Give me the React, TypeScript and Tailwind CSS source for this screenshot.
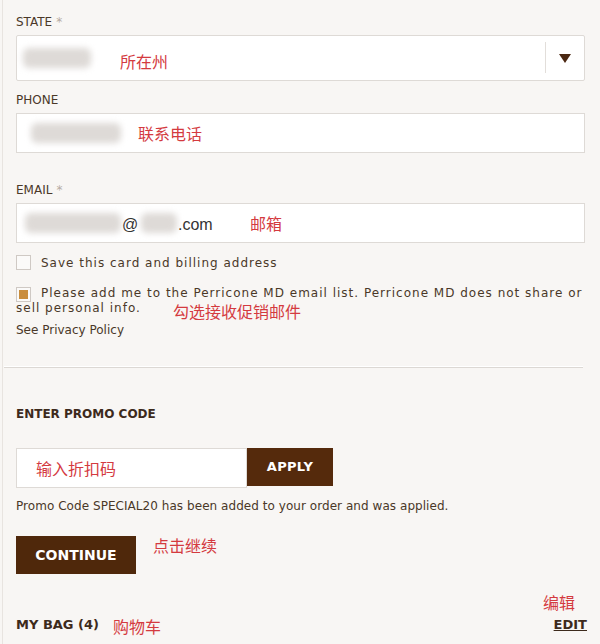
const dv = "font-['DejaVu_Sans',Verdana,sans-serif]";
const cjk = "font-['Noto_Sans_CJK_SC',sans-serif] text-[#d43a3f]";

const Blur = ({ className }: { className: string }) => (
  <div className={`absolute bg-[#dedad7] blur-[3px] rounded-md ${className}`}></div>
);

const Label = ({ text, required }: { text: string; required?: boolean }) => (
  <div className={`${dv} text-[12px] leading-4 text-[#4a3828]`}>
    {text}
    {required && <span className="text-[#b5aba3] ml-1">*</span>}
  </div>
);

const App = () => {
  return (
    <div className="w-[600px] h-[644px] bg-[#f8f6f4] overflow-hidden pl-[2px]">
      <div className="h-full border-l border-[#e8e4e0] pl-[13px] pr-[15px] pt-[14px]">
        <Label text="STATE" required />
        <div className="mt-[5px] h-[46px] bg-white border border-[#dedad6] rounded-[2px] relative flex items-center">
          <Blur className="left-[6px] top-[12px] w-[68px] h-[20px]" />
          <span className={`${cjk} text-[16px] ml-[103px] mt-[6px]`}>所在州</span>
          <div className="absolute right-[38px] top-[6px] h-[31px] w-px bg-[#e2deda]"></div>
          <svg className="absolute right-[13px] top-[18px]" width="12" height="9" viewBox="0 0 12 9">
            <path d="M0 0 H12 L6 9 Z" fill="#4b2812" />
          </svg>
        </div>

        <div className="mt-[11px]">
          <Label text="PHONE" />
        </div>
        <div className="mt-[5px] h-[40px] bg-white border border-[#dedad6] relative flex items-center">
          <Blur className="left-[14px] top-[9px] w-[90px] h-[20px]" />
          <span className={`${cjk} text-[16px] ml-[121px]`}>联系电话</span>
        </div>

        <div className="mt-[29px]">
          <Label text="EMAIL" required />
        </div>
        <div className="mt-[5px] h-[40px] bg-white border border-[#dedad6] relative flex items-center font-['Liberation_Sans',Arial,sans-serif] text-[16px] text-[#333]">
          <Blur className="left-[8px] top-[9px] w-[96px] h-[20px]" />
          <Blur className="left-[124px] top-[9px] w-[36px] h-[20px]" />
          <span className="absolute left-[105px] top-[9px]">@</span>
          <span className="absolute left-[161px] top-[9px]">.com</span>
          <span className={`${cjk} absolute left-[233px] top-[7px]`}>邮箱</span>
        </div>

        <div className={`${dv} text-[12px] text-[#4a3828]`}>
          <div className="mt-[12px] flex items-center h-[15px]">
            <div className="w-[15px] h-[15px] border border-[#cfc9c4] bg-[#fbfaf9]"></div>
            <span className="ml-[10px] tracking-[1px]">Save this card and billing address</span>
          </div>
          <div className="mt-[16px] relative leading-[15px] tracking-[1px]">
            <div className="absolute left-0 top-[1px] w-[15px] h-[15px] border border-[#cfc9c4] bg-[#fbfaf9] flex items-center justify-center">
              <div className="w-[9px] h-[9px] bg-[#c98d3d]"></div>
            </div>
            <span className="inline-block w-[25px]"></span>
            Please add me to the Perricone MD email list. Perricone MD does not share or sell personal info.
            <span className={`${cjk} inline-block align-top h-[15px] text-[16px] tracking-normal leading-[15px] relative top-[3px] ml-[32px]`}>勾选接收促销邮件</span>
          </div>
          <div className="mt-[6px] leading-4">See Privacy Policy</div>
        </div>

        <div className="mt-[29px] -ml-[12px] mr-[2px] border-t border-[#dcd8d4] shadow-[0_-1px_0_#ffffff]"></div>

        <div className={`${dv} mt-[38px] text-[12px] leading-4 font-bold text-[#3d2a1c]`}>ENTER PROMO CODE</div>

        <div className="mt-[26px] flex items-start">
          <div className="w-[231px] h-[40px] bg-white border border-[#dedad6] flex items-center">
            <span className={`${cjk} text-[16px] ml-[19px]`}>输入折扣码</span>
          </div>
          <button className={`${dv} h-[38px] w-[86px] bg-[#552a0c] text-white text-[13px] font-bold tracking-[0.3px]`}>APPLY</button>
        </div>

        <div className={`${dv} mt-[10px] text-[12px] leading-4 text-[#4a3828] tracking-[0.05px]`}>
          Promo Code SPECIAL20 has been added to your order and was applied.
        </div>

        <div className="mt-[22px] flex items-start">
          <button className={`${dv} h-[38px] w-[120px] bg-[#4f280b] text-white text-[14px] font-bold`}>CONTINUE</button>
          <span className={`${cjk} text-[16px] ml-[17px] -mt-[3px]`}>点击继续</span>
        </div>

        <div className="mt-[18px] flex justify-end pr-[10px]">
          <span className={`${cjk} text-[16px] leading-5`}>编辑</span>
        </div>
        <div className="-mt-[1px] flex items-center -mr-[2px]">
          <span className={`${dv} text-[13px] font-bold text-[#3d2a1c]`}>MY BAG (4)</span>
          <span className={`${cjk} text-[16px] ml-[14px] mt-[3px]`}>购物车</span>
          <span className={`${dv} ml-auto text-[13px] font-bold text-[#3d2a1c] underline`}>EDIT</span>
        </div>
      </div>
    </div>
  );
};

export default App;
